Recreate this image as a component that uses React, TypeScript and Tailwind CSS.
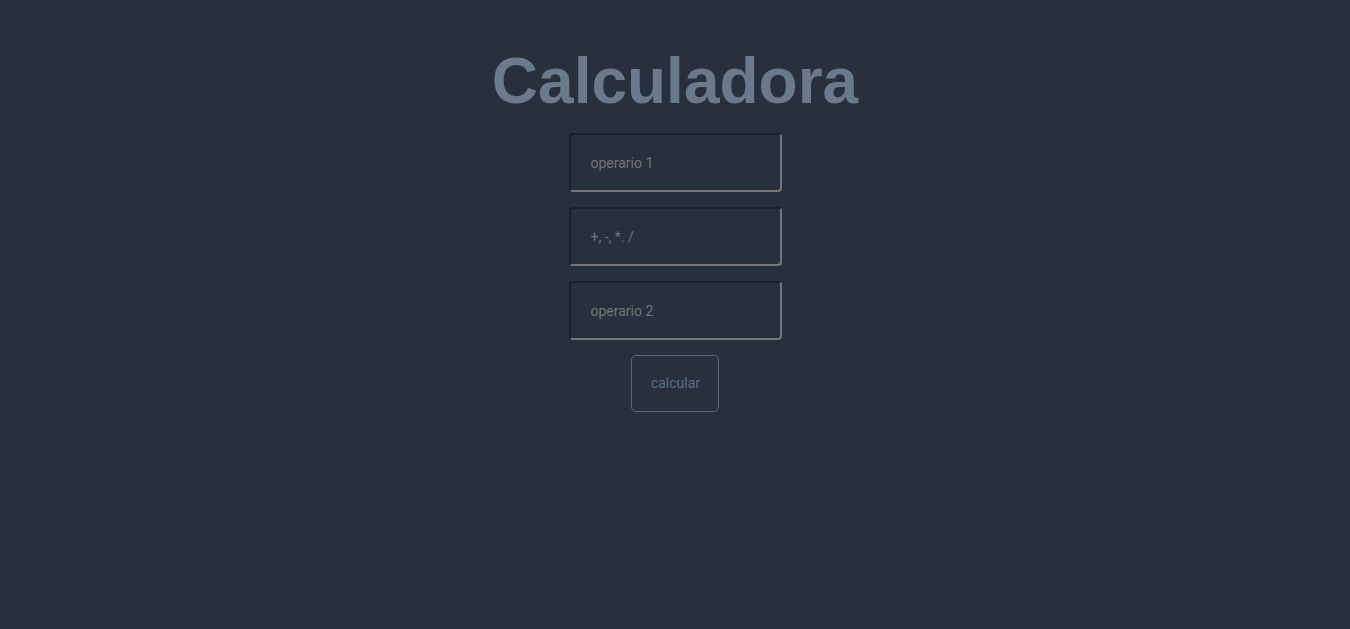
import { useState } from "react";

const inputClass =
  "w-[213px] h-[59px] rounded-[4px] border-2 border-t-[#1d2126] border-l-[#1d2126] border-b-[#767676] border-r-[#767676] bg-transparent pl-[20px] pr-3 text-[14px] text-[#9aa3ad] placeholder:text-[#757575] outline-none font-['Roboto',sans-serif]";

const App = () => {
  const [a, setA] = useState<string>("");
  const [op, setOp] = useState<string>("");
  const [b, setB] = useState<string>("");

  return (
    <div className="min-h-[629px] w-full bg-[#27303c] flex flex-col items-center pt-[44px]">
      <h1 className="text-[64px] leading-[74px] font-bold text-[#6a798b] font-['Liberation_Sans',Arial,sans-serif] mb-[15px]">
        Calculadora
      </h1>
      <div className="flex flex-col items-center gap-[15px]">
        <input
          className={inputClass}
          placeholder="operario 1"
          value={a}
          onChange={(e) => setA(e.target.value)}
        />
        <input
          className={inputClass}
          placeholder="+, -, *. /"
          value={op}
          onChange={(e) => setOp(e.target.value)}
        />
        <input
          className={inputClass}
          placeholder="operario 2"
          value={b}
          onChange={(e) => setB(e.target.value)}
        />
        <button
          type="button"
          className="w-[88px] h-[57px] rounded-[5px] border border-[#56677a] pl-[1px] text-[14px] text-[#5c6e83] font-['Roboto',sans-serif] bg-transparent"
        >
          calcular
        </button>
      </div>
    </div>
  );
};

export default App;
